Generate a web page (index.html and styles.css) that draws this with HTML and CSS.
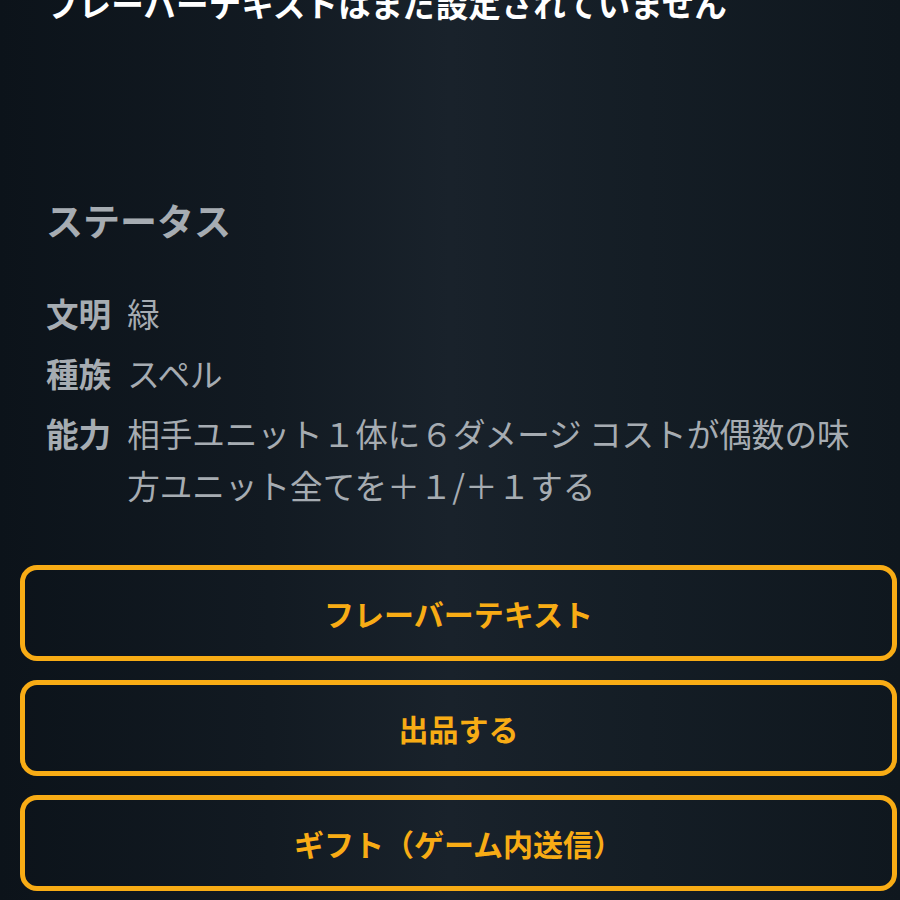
FILE: index.html
```html
<!DOCTYPE html>
<html lang="ja">
<head>
<meta charset="utf-8">
<title>カード詳細</title>
<link rel="stylesheet" href="styles.css">
</head>
<body>
<main class="page">
  <p class="flavor">フレーバーテキストはまだ設定されていません</p>
  <section class="status">
    <h2 class="status-title">ステータス</h2>
    <dl class="status-list">
      <div class="status-row">
        <dt class="status-label">文明</dt>
        <dd class="status-value">緑</dd>
      </div>
      <div class="status-row">
        <dt class="status-label">種族</dt>
        <dd class="status-value">スペル</dd>
      </div>
      <div class="status-row">
        <dt class="status-label">能力</dt>
        <dd class="status-value">相手ユニット１体に６ダメージ コストが偶数の味方ユニット全てを＋１/＋１する</dd>
      </div>
    </dl>
  </section>
  <div class="actions">
    <button class="action-btn" type="button">フレーバーテキスト</button>
    <button class="action-btn" type="button">出品する</button>
    <button class="action-btn" type="button">ギフト（ゲーム内送信）</button>
  </div>
</main>
</body>
</html>
```

FILE: styles.css
```css
html, body {
  margin: 0;
  padding: 0;
  height: 100%;
}

body {
  font-family: "Noto Sans CJK JP", "Noto Sans", sans-serif;
  background: linear-gradient(90deg, #0c131a 0%, #121a22 30%, #19222b 50%, #141d25 72%, #0f171e 100%);
  color: #a6acb2;
  overflow: hidden;
}

.page {
  display: flex;
  flex-direction: column;
}

.flavor {
  margin: -21px 0 0 0;
  padding: 0 40px 0 46px;
  font-size: 32.6px;
  line-height: 48px;
  font-weight: 700;
  color: #ffffff;
}

.status {
  margin-top: 166px;
  padding: 0 40px 0 46px;
}

.status-title {
  margin: 0;
  font-size: 37px;
  line-height: 54px;
  font-weight: 700;
  color: #a6acb2;
}

.status-list {
  margin: 40px 0 0 0;
  display: flex;
  flex-direction: column;
  gap: 8px;
}

.status-row {
  display: flex;
  gap: 16px;
}

.status-label {
  flex: none;
  font-size: 32.6px;
  line-height: 52px;
  font-weight: 700;
  margin: 0;
}

.status-value {
  margin: 0;
  font-size: 32.6px;
  line-height: 52px;
  font-weight: 400;
}

.actions {
  margin-top: 54px;
  padding: 0 3px 0 20px;
  display: flex;
  flex-direction: column;
  gap: 19px;
}

.action-btn {
  height: 96px;
  border: 5px solid #f8ac15;
  border-radius: 17px;
  background: transparent;
  color: #f8ac15;
  font-family: "Noto Sans CJK JP", "Noto Sans", sans-serif;
  font-size: 30px;
  font-weight: 700;
  padding: 0;
}
```
